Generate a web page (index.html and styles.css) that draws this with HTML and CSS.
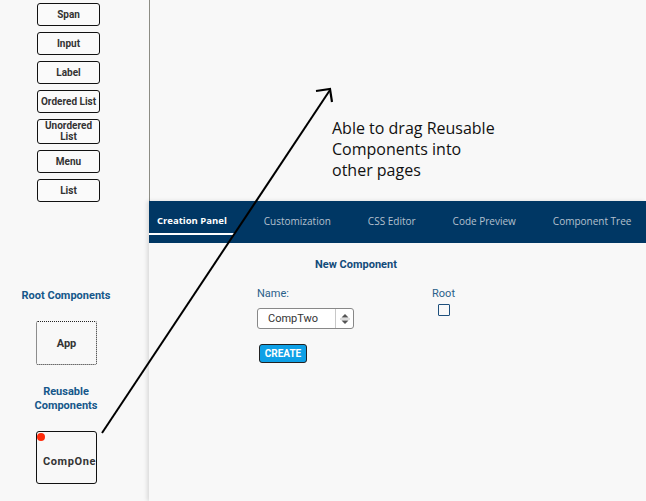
FILE: index.html
```html
<!DOCTYPE html>
<html lang="en">
<head>
<meta charset="UTF-8">
<meta name="viewport" content="width=device-width, initial-scale=1.0">
<title>Creation Panel</title>
<link rel="stylesheet" href="styles.css">
</head>
<body>
<div class="app">
    <div class="sidebar">
        <div class="html-btn">Span</div>
        <div class="html-btn">Input</div>
        <div class="html-btn">Label</div>
        <div class="html-btn">Ordered List</div>
        <div class="html-btn two-line">Unordered List</div>
        <div class="html-btn">Menu</div>
        <div class="html-btn">List</div>

        <div class="side-title root-title">Root Components</div>
        <div class="comp-box root-box">App</div>

        <div class="side-title reuse-title">Reusable<br>Components</div>
        <div class="comp-box reuse-box">
            <span class="dot"></span>
            <span class="comp-name">CompOne</span>
        </div>
    </div>

    <div class="main">
        <div class="canvas">
            <p class="note">Able to drag Reusable Components into other pages</p>
        </div>
        <div class="panel">
            <div class="tabs">
                <div class="tab active">Creation Panel</div>
                <div class="tab">Customization</div>
                <div class="tab">CSS Editor</div>
                <div class="tab">Code Preview</div>
                <div class="tab">Component Tree</div>
            </div>
            <div class="creation">
                <div class="creation-title">New Component</div>
                <div class="field-row">
                    <div class="name-group">
                        <label class="field-label">Name:</label>
                        <div class="name-input">
                            <span class="name-value">CompTwo</span>
                            <span class="spinner">
                                <svg width="10" height="12" viewBox="0 0 10 12"><path d="M1.5 4.5 L5 1 L8.5 4.5 Z" fill="#555"/><path d="M1.5 7.5 L5 11 L8.5 7.5 Z" fill="#555"/><line x1="0" y1="6" x2="10" y2="6" stroke="#bbb" stroke-width="1"/></svg>
                            </span>
                        </div>
                    </div>
                    <div class="root-group">
                        <label class="field-label">Root</label>
                        <span class="checkbox"></span>
                    </div>
                </div>
                <button class="btn-create">CREATE</button>
            </div>
        </div>
    </div>
</div>

<svg class="drag-arrow" width="646" height="501" viewBox="0 0 646 501">
    <line x1="102" y1="433" x2="330" y2="90" stroke="#000" stroke-width="2"/>
    <polyline points="316,91 330,89 332,102" fill="none" stroke="#000" stroke-width="2.2" stroke-linejoin="miter"/>
</svg>
</body>
</html>
```

FILE: styles.css
```css
body {
    margin: 0;
    background: #f8f8f8;
    font-family: Roboto, "Liberation Sans", sans-serif;
    color: #333;
}
.app {
    display: flex;
    height: 501px;
    overflow: hidden;
}
.sidebar {
    width: 149px;
    flex-shrink: 0;
    padding-top: 3px;
    box-sizing: border-box;
}
.html-btn {
    width: 63px;
    height: 23px;
    margin: 0 0 6px 37px;
    box-sizing: border-box;
    border: 1px solid #111;
    border-radius: 3px;
    display: flex;
    align-items: center;
    justify-content: center;
    text-align: center;
    font-size: 10px;
    font-weight: bold;
    color: #333;
    background: #fafafa;
}
.html-btn.two-line {
    height: 25px;
    line-height: 11px;
    padding: 0 6px 1px;
}
.side-title {
    width: 132px;
    text-align: center;
    font-size: 11px;
    line-height: 14px;
    font-weight: bold;
    color: #15578a;
}
.root-title {
    margin-top: 87px;
}
.reuse-title {
    margin-top: 20px;
}
.comp-box {
    margin-left: 36px;
    width: 61px;
    box-sizing: border-box;
    display: flex;
    align-items: center;
    font-size: 11px;
    font-weight: bold;
    color: #333;
}
.root-box {
    height: 44px;
    margin-top: 18px;
    border: 1px dotted #222;
    border-radius: 2px;
    justify-content: center;
}
.reuse-box {
    position: relative;
    height: 53px;
    margin-top: 18px;
    border: 1px solid #111;
    border-radius: 3px;
    padding-left: 6px;
    white-space: nowrap;
}
.comp-name {
    letter-spacing: 0.6px;
    margin-top: 8px;
}
.dot {
    position: absolute;
    left: 0;
    top: 1px;
    width: 8px;
    height: 8px;
    border-radius: 50%;
    background: #ff2a0a;
}
.main {
    flex: 1;
    display: flex;
    flex-direction: column;
}
.canvas {
    height: 201px;
    border-left: 1px solid #8c8c84;
    box-sizing: border-box;
    padding: 118px 0 0 182px;
}
.note {
    margin: 0;
    width: 172px;
    font-family: "Open Sans", sans-serif;
    font-size: 16px;
    line-height: 21px;
    color: #111;
}
.panel {
    flex: 1;
    box-shadow: -2px 0 4px rgba(0, 0, 0, 0.12);
}
.tabs {
    height: 42px;
    background: #003764;
    display: flex;
    align-items: center;
    gap: 37px;
    padding-left: 8px;
    font-family: "Open Sans", sans-serif;
    font-size: 10px;
    color: #b4c0ce;
}
.tab {
    position: relative;
    white-space: nowrap;
    margin-top: -3px;
}
.tab.active {
    color: #fff;
    font-size: 9.5px;
    font-weight: bold;
}
.tab.active::after {
    content: "";
    position: absolute;
    left: -8px;
    right: -7px;
    top: 19px;
    height: 2px;
    background: #fff;
}
.creation {
    width: 198px;
    margin-left: 108px;
    padding-top: 15px;
}
.creation-title {
    text-align: center;
    font-size: 11px;
    line-height: 14px;
    font-weight: bold;
    color: #124b7a;
}
.field-row {
    display: flex;
    justify-content: space-between;
    margin-top: 15px;
}
.field-label {
    display: block;
    font-size: 11px;
    line-height: 14px;
    color: #2a5f8a;
}
.name-input {
    margin-top: 7px;
    width: 97px;
    height: 21px;
    box-sizing: border-box;
    border: 1px solid #888;
    border-radius: 3px;
    background: #fff;
    display: flex;
    align-items: center;
    justify-content: space-between;
}
.name-value {
    padding-left: 10px;
    font-size: 11px;
    color: #333;
}
.spinner {
    width: 17px;
    height: 19px;
    border-left: 1px solid #c8c8c8;
    display: flex;
    align-items: center;
    justify-content: center;
}
.root-group {
    display: flex;
    flex-direction: column;
    align-items: center;
}
.checkbox {
    margin-top: 3px;
    width: 12px;
    height: 12px;
    box-sizing: border-box;
    border: 1.5px solid #1e4f7c;
    border-radius: 1px;
}
.btn-create {
    margin: 15px 0 0 2px;
    width: 48px;
    height: 19px;
    padding: 0;
    border: 1.5px solid #222;
    border-radius: 3px;
    background: #0ea0e6;
    color: #fff;
    font-family: Roboto, sans-serif;
    font-size: 10px;
    font-weight: bold;
}
.drag-arrow {
    position: absolute;
    left: 0;
    top: 0;
    pointer-events: none;
}
```
